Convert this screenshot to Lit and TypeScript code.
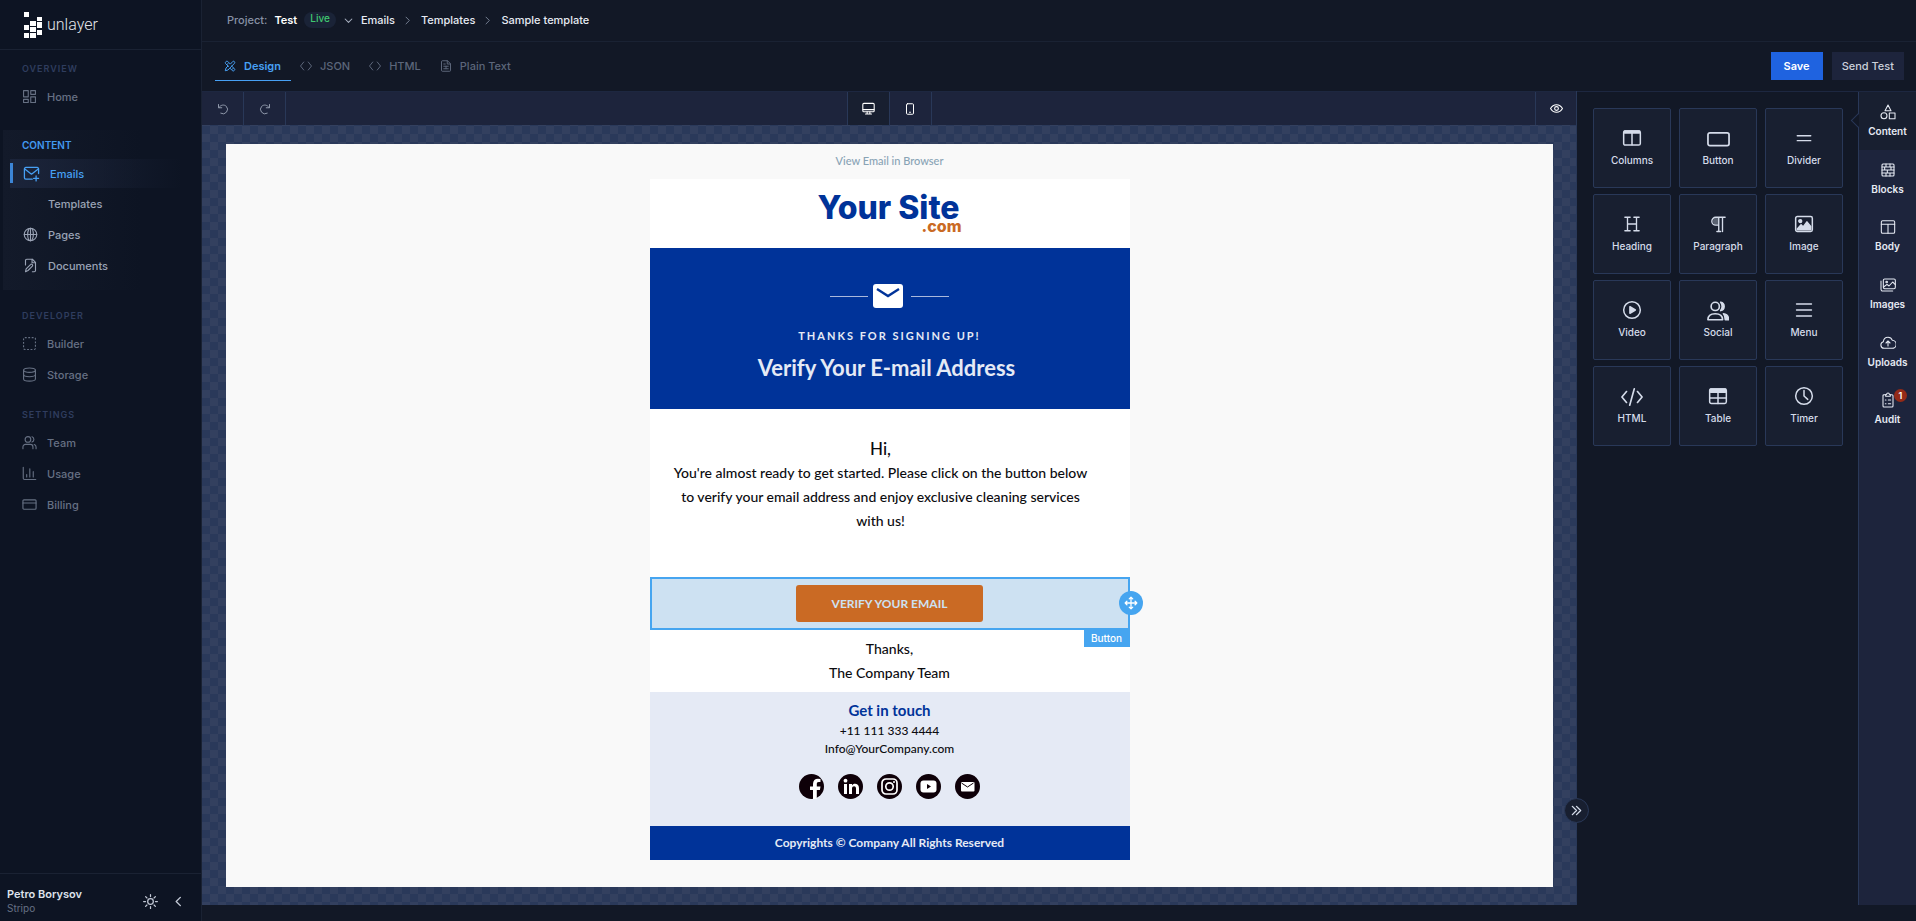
import { LitElement, html, svg, css, TemplateResult, SVGTemplateResult } from "lit";
import { customElement, property, state } from "lit/decorators.js";

/** Glyphs drawn on a 24 unit grid, stroked with the current text colour. */
const GLYPHS: Record<string, SVGTemplateResult> = {
  home: svg`<rect x="2.5" y="2.5" width="7.5" height="10"/><rect x="14" y="2.5" width="7.5" height="6"/><rect x="2.5" y="16.5" width="7.5" height="5"/><rect x="14" y="12.5" width="7.5" height="9"/>`,
  mailPlus: svg`<path d="M22 12V5.500a2 2 0 0 0-2-2H4a2 2 0 0 0-2 2V18a2 2 0 0 0 2 2h9"/><path d="M2.500 5.500 12 13l9.500-7.500"/><path d="M18.500 15.500v7M15 19h7"/>`,
  globe: svg`<circle cx="12" cy="12" r="10"/><ellipse cx="12" cy="12" rx="4.500" ry="10"/><path d="M2 12h20M12 2v20"/>`,
  docEdit: svg`<path d="M4 11V4a2 2 0 0 1 2-2h9l5 5v13a2 2 0 0 1-2 2h-3"/><path d="M14.500 2v5.500H20"/><path d="m4 22 1-4.500 7-7a1.800 1.800 0 0 1 3 2.500l-7 7z"/>`,
  builder: svg`<rect x="2.500" y="2.500" width="19" height="19" rx="2" stroke-dasharray="3 2.500" stroke-linecap="butt"/>`,
  storage: svg`<ellipse cx="12" cy="5" rx="9.500" ry="3.500"/><path d="M2.500 5v14c0 2 4 3.500 9.500 3.500s9.500-1.500 9.500-3.500V5"/><path d="M2.500 12c0 2 4 3.500 9.500 3.500s9.500-1.500 9.500-3.500"/>`,
  team: svg`<circle cx="9.500" cy="7" r="4.500"/><path d="M1.500 22v-3a4 4 0 0 1 4-4h8a4 4 0 0 1 4 4v3"/><path d="M16 2.800a4.500 4.500 0 0 1 0 8.500M22.500 22v-3a4 4 0 0 0-3-3.800"/>`,
  usage: svg`<path d="M2 2v17.500a2 2 0 0 0 2 2h18"/><path d="M7.500 17.500v-4M12.500 17.500V4.500M18 17.500V9"/>`,
  billing: svg`<rect x="1.500" y="4.500" width="21" height="15" rx="1.500"/><path d="M1.500 9.500h21"/>`,
  sun: svg`<circle cx="12" cy="12" r="4.500"/><path d="M12 1v3M12 20v3M1 12h3M20 12h3M4.200 4.200l2.100 2.100M17.700 17.700l2.100 2.100M4.200 19.800l2.100-2.100M17.700 6.300l2.100-2.100"/>`,
  left: svg`<path d="M16 3 7 12l9 9"/>`,
  right: svg`<path d="m8 3 9 9-9 9"/>`,
  down: svg`<path d="m3 8 9 9 9-9"/>`,
  chevrons: svg`<path d="m3 3 9 9-9 9M12 3l9 9-9 9"/>`,
  design: svg`<path d="m13 8 4.500-5a2.500 2.500 0 0 1 3.500 3.500L8 20l-5.500 1.500L4 16l4-4"/><path d="m9 13-6-6a2 2 0 0 1 0-2.500l1.500-1.700a2 2 0 0 1 2.800 0L12 7.500M15 12l6 5.500a2 2 0 0 1 0 2.800l-1.200 1.200a2 2 0 0 1-2.800 0L12 16.500M5.500 9.500 8 7M16 19l2.500-2.500"/>`,
  code: svg`<path d="m7.500 4-6.500 8 6.500 8M16.500 4l6.500 8-6.500 8"/>`,
  text: svg`<path d="M3 3a1.500 1.500 0 0 1 1.500-1.500H15l6 6V21a1.500 1.500 0 0 1-1.500 1.500h-15A1.500 1.500 0 0 1 3 21z"/><path d="M14.500 1.500V8H21M7.500 8h3M7.500 12.500h9M7.500 17.500h9M12 12.500v5"/>`,
  undo: svg`<path d="M3 3v6.500h6.500"/><path d="M3.500 9.500C7 3.500 14 2.500 18.500 6.500a9 9 0 0 1-11 14"/>`,
  redo: svg`<path d="M21 3v6.500h-6.500"/><path d="M20.500 9.500C17 3.500 10 2.500 5.500 6.500a9 9 0 0 0 11 14"/>`,
  desktop: svg`<rect x="1.500" y="2.500" width="21" height="15.500" rx="2"/><path d="M2 14h20M9.500 18v3.500M14.500 18v3.500M6.500 22h11"/>`,
  tablet: svg`<rect x="5" y="1.500" width="14" height="21" rx="2"/><path d="M11 18.500h2"/>`,
  eye: svg`<path d="M1 12c2.500-4.500 6.500-7 11-7s8.500 2.500 11 7c-2.500 4.500-6.500 7-11 7S3.500 16.500 1 12z"/><circle cx="12" cy="12" r="3.500"/>`,
  columns: svg`<rect x="2" y="3.500" width="20" height="17" rx="2"/><path d="M12 4v16"/><path d="M3 3.500h18v2.500H3z" fill="currentColor"/>`,
  button: svg`<rect x="1" y="5" width="22" height="13.500" rx="2"/>`,
  divider: svg`<path d="M3 9h18M3 15.500h18"/>`,
  heading: svg`<path d="M6 3v18M18 3v18M6 12h12M2.500 3h7M14.500 3h7M2.500 21h7M14.500 21h7"/>`,
  paragraph: svg`<path d="M13 22V3M18 22V3M21.500 3H9a5 5 0 0 0 0 10.500h4M10.500 22h5"/><path d="M9 4h4v9H9c-5 0-5-9 0-9z" fill="currentColor" fill-opacity="0.350" stroke="none"/>`,
  image: svg`<rect x="2" y="3" width="20" height="18" rx="2"/><circle cx="7.500" cy="8.500" r="1.700" fill="currentColor"/><path d="m4 18 4.500-5 2.500 2.500 4.500-6L20 15v4H4z" fill="currentColor"/>`,
  video: svg`<circle cx="12" cy="12" r="10"/><path d="M9.500 8v8l6.500-4z" fill="currentColor"/>`,
  social: svg`<circle cx="9" cy="7" r="4.500"/><path d="M1 21.500c0-4.500 3-6.500 8-6.500s8 2 8 6.500z"/><path d="M15 2.500a4.600 4.600 0 0 1 0 9c1.800-2.500 1.800-6.500 0-9zM18 15c3.500.500 5.500 3 5.500 6.500H20c0-3-.5-5-2-6.500z" fill="currentColor"/>`,
  menu: svg`<path d="M2 4h20M2 12h20M2 20h20"/>`,
  html: svg`<path d="m6 6-5 6 5 6M18 6l5 6-5 6M14.500 3l-5 18"/>`,
  table: svg`<rect x="2" y="3.500" width="20" height="17.500" rx="2"/><path d="M2 14.500h20M12 8v13"/><path d="M3 3.500h18v4H3z" fill="currentColor"/>`,
  timer: svg`<circle cx="12" cy="12" r="10"/><path d="M12 5.500V12l4.500 4"/>`,
  shapes: svg`<path d="M12 1.500 16.500 10h-9z"/><circle cx="6" cy="17.500" r="4.500"/><rect x="14" y="13.500" width="8.500" height="8.500"/>`,
  blocks: svg`<rect x="3" y="3" width="18" height="18" rx="1.500"/><path d="M3 7.500h18M3 12h18M3 16.500h18M9 3v4.500M15 3v4.500M7 7.500V12M16.500 7.500V12M11 12v4.500M9 16.500V21M15 16.500V21"/>`,
  body: svg`<rect x="2" y="2.500" width="20" height="19" rx="2"/><path d="M2 8h20M12 8v13.500"/>`,
  images: svg`<rect x="5" y="3" width="18" height="14.500" rx="2"/><path d="M1.500 6v12.500a2.500 2.500 0 0 0 2.500 2.500h15"/><circle cx="10" cy="7.500" r="1.200"/><path d="m5.500 15 5-4 3 2.500 5.500-6 4 4"/>`,
  uploads: svg`<path d="M6 20a5 5 0 0 1-1-9.800C5.500 6 8.500 3.500 12 3.500c3.300 0 5.500 1.800 6.500 4.500A6 6 0 0 1 18 20z"/><path d="M12 16.500V9.500M9 12l3-3 3 3"/>`,
  audit: svg`<path d="M9 4H6a1.500 1.500 0 0 0-1.500 1.500V21A1.500 1.500 0 0 0 6 22.500h12a1.500 1.500 0 0 0 1.500-1.500V5.500A1.500 1.500 0 0 0 18 4h-3"/><path d="M8.500 6.500V4L10 3.500a2 2 0 0 1 4 0l1.500.5v2.500zM8 12h1M12.500 12H16M8 17.500h1M12.500 17.500H16"/>`,
  move: svg`<path d="M12 2v20M2 12h20M9 5l3-3 3 3M9 19l3 3 3-3M5 9l-3 3 3 3M19 9l3 3-3 3"/>`,
};

const icon = (name: string, size = 16, weight = 2): TemplateResult => html`<svg
  width=${size} height=${size} viewBox="0 0 24 24" fill="none" stroke="currentColor"
  stroke-width=${weight} stroke-linejoin="round" stroke-linecap="round" aria-hidden="true"
>${GLYPHS[name]}</svg>`;

const reset = css`
  *, *::before, *::after { box-sizing: border-box; }
  svg { display: block; flex: none; }
  a { color: inherit; text-decoration: none; }
  button { font: inherit; color: inherit; background: none; border: 0; padding: 0; cursor: pointer; }
  h1, h2, h3, p, ul, ol { margin: 0; padding: 0; list-style: none; font-weight: inherit; font-size: inherit; }
`;

interface NavItem { label: string; glyph?: string; active?: boolean; }
interface NavGroup { title: string; current?: boolean; items: NavItem[]; }

@customElement("side-nav")
export class SideNav extends LitElement {
  static styles = [reset, css`
    :host { display: flex; flex-direction: column; background: #0d1423; border-right: 1px solid #1a2233; color: #667083; font-size: 11px; font-weight: 500; }
    .brand { display: flex; align-items: center; gap: 5px; height: 50px; padding-left: 24px; border-bottom: 1px solid #1a2233; color: #e3e5ea; font: 300 16px/20px Roboto, sans-serif; }
    .nav { flex: 1; padding-top: 7px; }
    .group { margin-bottom: 13px; }
    .title { height: 24px; padding-left: 22px; font-size: 9px; line-height: 24px; font-weight: 600; letter-spacing: 1px; color: #2f3d5e; text-transform: uppercase; }
    .current { margin: 18px 0 14px 3px; padding: 3px 0 9px; background: linear-gradient(90deg, #131a2a, #0d1423 70%); color: #9aa3b5; }
    .current .title { color: #4299f0; padding-left: 19px; letter-spacing: 0; font-size: 10px; }
    .link { display: flex; align-items: center; gap: 10px; height: 31px; padding-left: 22px; }
    .glyph { display: flex; width: 15px; }
    .current .link { padding-left: 20px; }
    .current .active { position: relative; height: 29px; margin: 2px 0 0 7px; padding-left: 13px; gap: 12px; color: #47a0f4; background: linear-gradient(90deg, #1b243a, rgba(13, 20, 35, 0) 90%); }
    .active::before { content: ""; position: absolute; left: 0; top: 4px; bottom: 5px; width: 3px; background: #3c85d6; }
    .footer { display: flex; align-items: center; gap: 15px; height: 48px; padding: 7px 17px 0 7px; border-top: 1px solid #1a2233; color: #c3c9d6; }
    .user { flex: 1; line-height: 14px; }
    .name { font-weight: 600; color: #dfe3ec; }
    .org { font-size: 10px; font-weight: 400; color: #667083; }
  `];

  private groups: NavGroup[] = [
    { title: "Overview", items: [{ label: "Home", glyph: "home" }] },
    { title: "Content", current: true, items: [
      { label: "Emails", glyph: "mailPlus", active: true }, { label: "Templates" },
      { label: "Pages", glyph: "globe" }, { label: "Documents", glyph: "docEdit" }] },
    { title: "Developer", items: [{ label: "Builder", glyph: "builder" }, { label: "Storage", glyph: "storage" }] },
    { title: "Settings", items: [{ label: "Team", glyph: "team" }, { label: "Usage", glyph: "usage" }, { label: "Billing", glyph: "billing" }] },
  ];

  render() {
    return html`
      <a class="brand" href="#">
        <svg width="18" height="26" viewBox="0 0 18 26" fill="#fff" aria-hidden="true">
          <path d="M0 0h5v5H0zM13 5h5v4h-5zM6 9h6v5H6zM13 10h5v6h-5zM0 13h5v5H0zM6 15h6v5H6zM13 18h5v5h-5zM0 21h5v5H0zM6 21h6v5H6z"/>
        </svg>
        <span>unlayer</span>
      </a>
      <nav class="nav">
        ${this.groups.map((g) => html`
          <section class="group ${g.current ? "current" : ""}">
            <h2 class="title">${g.title}</h2>
            ${g.items.map((i) => html`
              <a class="link ${i.active ? "active" : ""}" href="#">
                <span class="glyph">${i.glyph ? icon(i.glyph, i.active ? 17 : 15, 1.8) : ""}</span>${i.label}
              </a>`)}
          </section>`)}
      </nav>
      <footer class="footer">
        <div class="user"><p class="name">Petro Borysov</p><p class="org">Stripo</p></div>
        <button aria-label="Toggle theme">${icon("sun", 15)}</button>
        <button aria-label="Collapse menu">${icon("left", 11, 3)}</button>
      </footer>`;
  }
}

@customElement("email-preview")
export class EmailPreview extends LitElement {
  static styles = [reset, css`
    :host { display: block; background: #f9f9f9; font-family: Lato, sans-serif; color: #0b0b0f; text-align: center; }
    .mail { width: 480px; margin: 0 auto; background: #fff; }
    .browser { display: block; padding: 8px 0 9px; background: #f9f9f9; font-size: 11px; line-height: 18px; color: #88a3b5; }
    .logo { display: grid; width: 144px; height: 69px; margin: 0 auto; padding-top: 15px; align-content: start; font-family: Inter, sans-serif; font-weight: 800; text-align: left; }
    .site { font-size: 32px; line-height: 28px; color: #039; white-space: nowrap; }
    .com { font-size: 16px; line-height: 9px; color: #ca6a24; text-align: right; }
    .hero { height: 161px; padding-top: 36px; background: #039; color: #e5eaf5; }
    .rule { display: flex; justify-content: center; align-items: center; gap: 5px; }
    .rule svg { margin-right: 3px; }
    .line { width: 38px; height: 1px; background: #a9b8dc; }
    .eyebrow { margin-top: 18px; font-size: 11px; line-height: 20px; font-weight: 700; letter-spacing: 2px; }
    .headline { margin-top: 7px; padding-right: 6px; font-size: 22px; line-height: 30px; font-weight: 700; }
    .copy { height: 168px; padding: 28px 18px 0 0; font-size: 14px; line-height: 24px; }
    .hi { font-size: 17px; }
    .selected { position: relative; height: 53px; padding: 6px; border: 2px solid #46a5f0; background: #cde1f2; }
    .cta { width: 187px; height: 37px; border-radius: 3px; background: #ca6a24; color: #cde1f2; font-size: 12px; font-weight: 700; }
    .handle { position: absolute; right: -15px; top: 12px; display: grid; place-items: center; width: 24px; height: 24px; border-radius: 50%; background: #46a5f0; color: #fff; }
    .tag { position: absolute; right: -2px; top: 51px; width: 46px; font: 500 10px/17px Inter, sans-serif; background: #46a5f0; color: #fff; }
    .sign { padding: 7px 0; font-size: 14px; line-height: 24px; }
    .contact { height: 134px; padding-top: 9px; background: #e5eaf5; font-size: 12px; line-height: 18px; }
    .touch { padding-bottom: 3px; font-size: 15px; font-weight: 700; color: #039; }
    .socials { display: flex; justify-content: center; gap: 14px; margin-top: 16px; }
    .legal { background: #039; color: #e5eaf5; font-size: 12px; font-weight: 700; line-height: 34px; }
  `];

  private socials: [string, SVGTemplateResult][] = [
    ["Facebook", svg`<path d="M14 25v-9h-3v-3.500h3V10c0-3.500 2-5.300 5-5.300l2.500.200v3h-1.700c-1.700 0-2 .9-2 2v2.600h3.700l-.6 3.500h-3.100v9z" fill="#fff"/>`],
    ["LinkedIn", svg`<path d="M6 10h3v10H6zM11 10h3v1.500c1-2.500 7-2.700 7 2.500v6h-3v-5.500c0-3-4-2.700-4 0V20h-3z" fill="#fff"/><circle cx="7.500" cy="6.700" r="1.900" fill="#fff"/>`],
    ["Instagram", svg`<g fill="none" stroke="#fff" stroke-width="1.700"><rect x="5" y="5" width="15" height="15" rx="4"/><circle cx="12.500" cy="12.500" r="3.700"/></g><circle cx="17" cy="8" r="1" fill="#fff"/>`],
    ["YouTube", svg`<rect x="4.500" y="6.500" width="16" height="12" rx="3" fill="#fff"/><path d="M11 10v5l4-2.500z" fill="#0e0008"/>`],
    ["Email", svg`<rect x="6" y="8" width="13.500" height="9.500" rx="1" fill="#fff"/><path d="m6.500 9 6 4 6-4" fill="none" stroke="#0e0008" stroke-width="1"/>`],
  ];

  render() {
    return html`
      <article class="mail">
        <a class="browser" href="#">View Email in Browser</a>
        <div class="logo"><span class="site">Your Site</span><span class="com">.com</span></div>
        <header class="hero">
          <div class="rule">
            <span class="line"></span>
            <svg width="30" height="24" viewBox="0 0 30 24" aria-hidden="true"><rect width="30" height="24" rx="3" fill="#fff"/><path d="m4 5 11 7 11-7" fill="none" stroke="#039" stroke-width="2.400"/></svg>
            <span class="line"></span>
          </div>
          <p class="eyebrow">THANKS FOR SIGNING UP!</p>
          <h1 class="headline">Verify Your E-mail Address</h1>
        </header>
        <section class="copy">
          <p class="hi">Hi,</p>
          <p>You're almost ready to get started. Please click on the button below<br />to verify your email address and enjoy exclusive cleaning services<br />with us!</p>
        </section>
        <section class="selected">
          <button class="cta">VERIFY YOUR EMAIL</button>
          <button class="handle" aria-label="Move block">${icon("move", 14, 2.2)}</button>
          <span class="tag">Button</span>
        </section>
        <section class="sign"><p>Thanks,</p><p>The Company Team</p></section>
        <section class="contact">
          <h2 class="touch">Get in touch</h2>
          <p>+11 111 333 4444</p><p>Info@YourCompany.com</p>
          <div class="socials">
            ${this.socials.map(([name, art]) => html`<a href="#" aria-label=${name}>
              <svg width="25" height="25" viewBox="0 0 25 25"><circle cx="12.500" cy="12.500" r="12.500" fill="#0e0008"/>${art}</svg></a>`)}
          </div>
        </section>
        <footer class="legal">Copyrights © Company All Rights Reserved</footer>
      </article>`;
  }
}

@customElement("tool-panel")
export class ToolPanel extends LitElement {
  @property({ type: Number }) issues = 0;

  static styles = [reset, css`
    :host { display: grid; grid-template-columns: 282px 57px; font-size: 10px; font-weight: 500; color: #d5dcea; }
    .tools { position: relative; border-right: 1px solid #293858; }
    .cards { display: grid; grid-template-columns: repeat(3, 1fr); gap: 6px 8px; padding: 16px 15px 16px 16px; }
    .card { display: flex; flex-direction: column; align-items: center; gap: 5px; height: 80px; padding-top: 19px; border: 1px solid #293858; border-radius: 2px; background: #181f30; line-height: 14px; }
    .card:hover { border-color: #46a5f0; }
    .art { display: grid; place-items: center; height: 20px; }
    .collapse { position: absolute; left: -13px; bottom: 82px; display: grid; place-items: center; width: 25px; height: 25px; border: 1px solid #293858; border-radius: 50%; background: #181f30; }
    .rail { background: #1d243c; font-weight: 600; }
    .tabs { display: grid; grid-auto-rows: 1fr; height: 346px; }
    .tab { position: relative; display: flex; flex-direction: column; align-items: center; gap: 4px; padding-top: 12px; line-height: 14px; color: #e6eaf3; }
    .active { background: #181f30; }
    .active::before { content: ""; position: absolute; left: -6px; top: 23px; width: 11px; height: 11px; transform: rotate(45deg); background: linear-gradient(45deg, #121826 50%, transparent 50%); border: solid #293858; border-width: 0 0 1px 1px; }
    .badge { position: absolute; left: 35px; top: 9px; width: 13px; height: 13px; border-radius: 50%; background: #942a17; color: #fff; font-size: 9px; line-height: 13px; text-align: center; }
  `];

  private cards: [string, string, number][] = [
    ["Columns", "columns", 20], ["Button", "button", 23], ["Divider", "divider", 18],
    ["Heading", "heading", 18], ["Paragraph", "paragraph", 18], ["Image", "image", 20],
    ["Video", "video", 20], ["Social", "social", 22], ["Menu", "menu", 18],
    ["HTML", "html", 22], ["Table", "table", 20], ["Timer", "timer", 20]];
  private rail = [["Content", "shapes"], ["Blocks", "blocks"], ["Body", "body"], ["Images", "images"],
    ["Uploads", "uploads"], ["Audit", "audit"]];

  render() {
    return html`
      <div class="tools">
        <div class="cards">
          ${this.cards.map(([label, glyph, size]) => html`<button class="card">
            <span class="art">${icon(glyph, size, 1.8)}</span><span>${label}</span></button>`)}
        </div>
        <button class="collapse" aria-label="Collapse panel">${icon("chevrons", 11, 3)}</button>
      </div>
      <nav class="rail"><div class="tabs">
        ${this.rail.map(([label, glyph], n) => html`<button class="tab ${n === 0 ? "active" : ""}">
          ${icon(glyph, 16, 1.6)}<span>${label}</span>
          ${glyph === "audit" ? html`<span class="badge">${this.issues}</span>` : ""}
        </button>`)}
      </div></nav>`;
  }
}

@customElement("app-root")
export class AppRoot extends LitElement {
  @state() private tab = "Design";

  static styles = [reset, css`
    :host { display: grid; grid-template-columns: 202px 1fr; min-height: 100vh; background: #121826; font: 500 11px/16px Inter, sans-serif; color: #e6eaf3; }
    .main { display: grid; grid-template-rows: 42px 49px 1fr; padding-bottom: 16px; min-width: 0; }
    .crumbs { display: flex; align-items: center; padding: 0 25px 1px; border-bottom: 1px solid #1a2233; white-space: nowrap; }
    .project { color: #8791a5; }
    .name { margin: 0 7px; font-weight: 600; color: #fff; }
    .live { padding: 0 6px 3px; border-radius: 8px; background: #1a2337; color: #40c870; font-size: 10px; line-height: 13px; }
    .pick { margin: 0 8px; color: #a8b0c0; }
    .sep { margin: 0 9px 0 8px; color: #7a8397; }
    .actions { display: flex; align-items: stretch; padding: 0 12px 0 13px; }
    .tabs { display: flex; flex: 1; align-self: center; height: 29px; }
    .tab { display: flex; align-items: center; gap: 8px; padding: 0 10px 0 9px; border-bottom: 1px solid transparent; color: #5c667a; }
    .tab[aria-selected="true"] { border-color: #47a0f4; color: #47a0f4; font-weight: 600; }
    .buttons { display: flex; align-items: center; gap: 9px; padding-bottom: 1px; }
    .btn { height: 28px; padding: 0 10px; background: #1d243c; color: #cbd0db; font-weight: 500; }
    .primary { padding: 0 13px; background: #1f63e0; color: #fff; font-weight: 600; }
    .work { display: grid; grid-template-columns: minmax(0, 1fr) auto; }
    .panel { border-top: 1px solid #1d2740; }
    .editor { display: grid; grid-template-rows: 34px 1fr; border-right: 1px solid #293858; }
    .toolbar { display: grid; grid-template-columns: 1fr auto 1fr; background: #1d243c; border-top: 1px solid #1d2740; color: #8f98aa; }
    .set { display: flex; }
    .tool { display: grid; place-items: center; width: 42px; border-right: 1px solid #293858; }
    .bright { color: #fff; }
    .set.bright { border-left: 1px solid #293858; }
    .on { background: #181f30; }
    .end { justify-content: flex-end; color: #fff; }
    .end .tool { width: 41px; border-right: 0; border-left: 1px solid #293858; }
    .canvas { display: grid; padding: 19px 23px 18px 24px; background: repeating-conic-gradient(#33405f 0 25%, #2a395a 0 50%) 0 1px / 16px 16px; }
  `];

  private tabs = [["Design", "design"], ["JSON", "code"], ["HTML", "code"], ["Plain Text", "text"]];

  render() {
    const sep = html`<span class="sep">${icon("right", 9, 2.5)}</span>`;
    return html`
      <side-nav></side-nav>
      <div class="main">
        <nav class="crumbs" aria-label="Breadcrumb">
          <span class="project">Project:</span><span class="name">Test</span><span class="live">Live</span>
          <button class="pick" aria-label="Choose project">${icon("down", 9, 2.8)}</button>
          <a href="#">Emails</a>${sep}<a href="#">Templates</a>${sep}<a href="#">Sample template</a>
        </nav>
        <div class="actions">
          <div class="tabs" role="tablist">
            ${this.tabs.map(([label, glyph]) => html`<button class="tab" role="tab"
              aria-selected=${this.tab === label} @click=${() => (this.tab = label)}>${icon(glyph, 12)}${label}</button>`)}
          </div>
          <div class="buttons"><button class="btn primary">Save</button><button class="btn">Send Test</button></div>
        </div>
        <div class="work">
          <div class="editor">
            <div class="toolbar">
              <div class="set"><button class="tool" aria-label="Undo">${icon("undo", 12)}</button><button class="tool" aria-label="Redo">${icon("redo", 12)}</button></div>
              <div class="set bright"><button class="tool on" aria-label="Desktop">${icon("desktop", 13)}</button><button class="tool" aria-label="Mobile">${icon("tablet", 12)}</button></div>
              <div class="set end"><button class="tool" aria-label="Preview">${icon("eye", 13)}</button></div>
            </div>
            <div class="canvas"><email-preview></email-preview></div>
          </div>
          <tool-panel class="panel" .issues=${1}></tool-panel>
        </div>
      </div>`;
  }
}
